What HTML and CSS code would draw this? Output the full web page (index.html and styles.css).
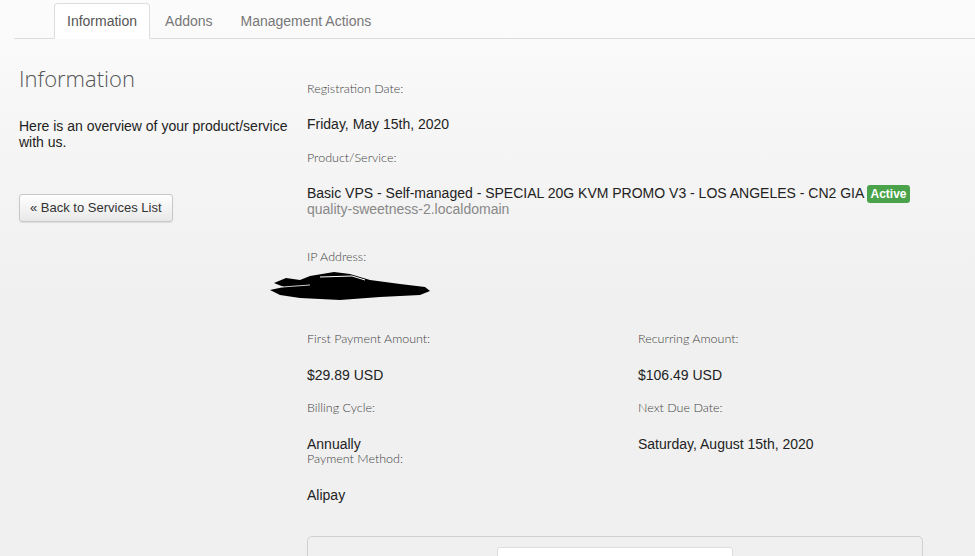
FILE: index.html
```html
<!DOCTYPE html>
<html>
<head>
<meta charset="utf-8">
<link rel="stylesheet" href="styles.css">
</head>
<body>
<div class="nav">
  <ul class="tabs">
    <li class="tab active">Information</li>
    <li class="tab">Addons</li>
    <li class="tab">Management Actions</li>
  </ul>
</div>
<div class="main">
  <div class="side">
    <h2 class="title">Information</h2>
    <p class="desc">Here is an overview of your product/service with us.</p>
    <button class="btn">« Back to Services List</button>
  </div>
  <div class="content">
    <div class="label">Registration Date:</div>
    <div class="value v1">Friday, May 15th, 2020</div>
    <div class="label l2">Product/Service:</div>
    <div class="value prod">Basic VPS - Self-managed - SPECIAL 20G KVM PROMO V3 - LOS ANGELES - CN2 GIA <span class="badge">Active</span><br><span class="domain">quality-sweetness-2.localdomain</span></div>
    <div class="label l-ip">IP Address:</div>
    <svg class="redact" width="170" height="30" viewBox="0 0 170 30">
      <path d="M0 19 L14 16 L4 12 L16 7 L30 9 L40 5 L64 1 L80 3 L100 9 L130 13 L155 16 L160 20 L150 24 L110 26 L70 29 L30 27 L10 24 Z" fill="#000"/>
      <path d="M50 6 L82 5 L95 9" stroke="#fff" stroke-width="1" fill="none"/>
      <path d="M12 16 L40 14" stroke="#fff" stroke-width="0.8" fill="none"/>
    </svg>
    <div class="grid">
      <div class="col">
        <div class="label">First Payment Amount:</div>
        <div class="value vg">$29.89 USD</div>
        <div class="label lg">Billing Cycle:</div>
        <div class="value vg">Annually</div>
        <div class="label lpm">Payment Method:</div>
        <div class="value vg">Alipay</div>
      </div>
      <div class="col">
        <div class="label">Recurring Amount:</div>
        <div class="value vg">$106.49 USD</div>
        <div class="label lg">Next Due Date:</div>
        <div class="value vg">Saturday, August 15th, 2020</div>
      </div>
    </div>
    <div class="panel">
      <div class="inner"></div>
    </div>
  </div>
</div>
</body>
</html>
```

FILE: styles.css
```css
html, body {
  margin: 0;
  padding: 0;
}
body {
  height: 556px;
  overflow: hidden;
  background: linear-gradient(#fcfcfc 0px, #f6f6f6 120px, #f0f0f0 300px, #f0f0f0 100%);
  font-family: "Liberation Sans", Arial, sans-serif;
  font-size: 14px;
  color: #333;
}
.nav {
  padding: 3px 0 0 14px;
}
.tabs {
  list-style: none;
  margin: 0;
  padding: 0 0 0 40px;
  display: flex;
  border-bottom: 1px solid #dddddd;
}
.tab {
  padding: 9px 12px;
  line-height: 16px;
  margin-right: 2px;
  margin-bottom: -1px;
  color: #777;
  border: 1px solid transparent;
  border-radius: 4px 4px 0 0;
}
.active {
  background: #fff;
  border-color: #dddddd #dddddd transparent;
  color: #555;
}
.main {
  display: flex;
  padding-top: 40px;
}
.side {
  width: 273px;
  padding-left: 19px;
  padding-right: 15px;
  flex: none;
}
.title {
  margin: -16px 0 0;
  font-family: "Open Sans", sans-serif;
  font-weight: 300;
  font-size: 22px;
  line-height: 30px;
  color: #555;
}
.desc {
  margin: 25px 0 0;
  line-height: 16px;
  color: #222;
}
.btn {
  margin-top: 44px;
  font-family: "Liberation Sans", Arial, sans-serif;
  font-size: 13px;
  line-height: 19px;
  padding: 3px 10px 4px;
  color: #333;
  background: linear-gradient(#ffffff, #e8e8e8);
  border: 1px solid #c8c8c8;
  border-radius: 3px;
  box-shadow: 0 1px 1px rgba(0,0,0,0.08);
}
.content {
  width: 616px;
}
.label {
  font-family: Lato, "Open Sans", sans-serif;
  font-weight: 300;
  font-size: 12.5px;
  line-height: 20px;
  color: #444;
}
.value {
  line-height: 20px;
  color: #222;
}
.v1 { margin-top: 15px; }
.l2 { margin-top: 14px; }
.prod {
  margin-top: 17px;
  line-height: 16px;
}
.badge {
  background: #4aa34a;
  color: #fff;
  font-weight: bold;
  font-size: 12px;
  line-height: 1;
  padding: 2px 3px;
  border-radius: 3px;
}
.domain {
  color: #888;
}
.l-ip { margin-top: 30px; }
.redact {
  display: block;
  margin: 4px 0 0 -37px;
}
.grid {
  display: grid;
  grid-template-columns: 331px 1fr;
  margin-top: 28px;
}
.vg { margin-top: 16px; }
.lg { margin-top: 13px; }
.lpm { margin-top: -5px; }
.panel {
  margin-top: 31px;
  height: 60px;
  border: 1px solid #d0d0d0;
  border-radius: 5px;
  background: #f0f0f0;
  padding: 10px 0 0 189px;
}
.inner {
  width: 234px;
  height: 40px;
  background: #fff;
  border: 1px solid #dddddd;
  border-radius: 3px;
}
```
